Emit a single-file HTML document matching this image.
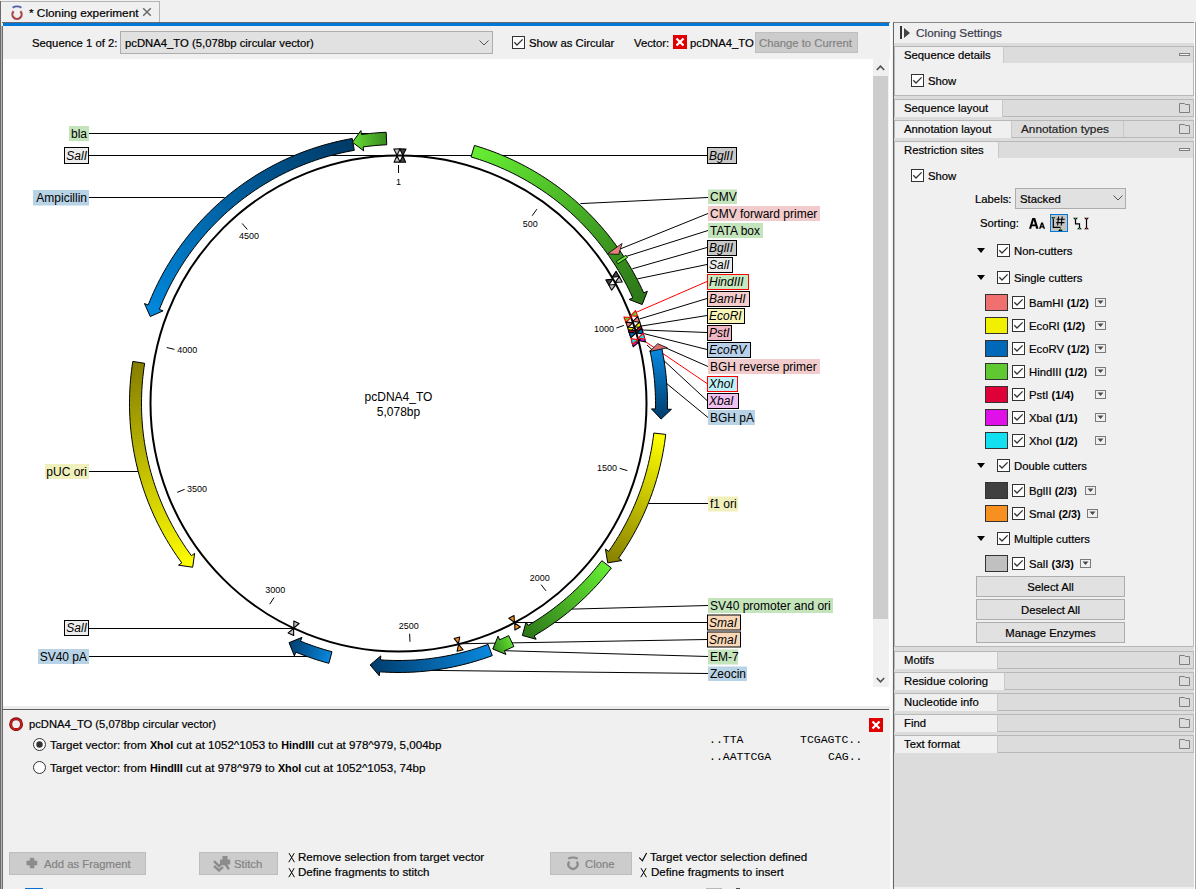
<!DOCTYPE html>
<html><head><meta charset="utf-8">
<style>
html,body{margin:0;padding:0}
body{width:1196px;height:889px;overflow:hidden;position:relative;background:#f0f0f0;font-family:"Liberation Sans",sans-serif;font-size:11.3px;color:#000}
.abs{position:absolute}
.t{position:absolute;white-space:nowrap;line-height:14px;-webkit-text-stroke:0.2px currentColor}
.secbox{left:894px;width:300px;background:#f0f0f0;border:1px solid #b8b8b8;box-sizing:border-box}
.sechead{left:894px;width:300px;background:#dcdcdc;border:1px solid #b8b8b8;box-sizing:border-box}
.sectab{left:894px;background:#f0f0f0;border-left:1px solid #b8b8b8;border-top:1px solid #b8b8b8;border-right:1px solid #c8c8c8;box-sizing:border-box}
.combo{background:#e1e1e1;border:1px solid #adadad}
.btn{background:#e1e1e1;border:1px solid #adadad;text-align:center;line-height:21px;-webkit-text-stroke:0.2px #000}
.dbtn{background:#cccccc;border:1px solid #bdbdbd;color:#838383;line-height:21px}
svg{display:block}
b{-webkit-text-stroke:0;font-size:10.8px}
svg text{font-family:"Liberation Sans",sans-serif}
</style></head><body>
<!-- tab bar -->
<div class="abs" style="left:1px;top:1px;width:159px;height:21px;background:#f0f0f0;border-top:1px solid #b4b4b4;border-right:1px solid #b4b4b4;box-sizing:border-box"></div>
<div class="abs" style="left:9px;top:4px"><svg width="16" height="18" viewBox="0 0 16 18"><path d="M3.6,3.6 Q8,1.2 12.4,3.6" fill="none" stroke="#5060a8" stroke-width="1.8"/><path d="M4.6,7.2 A4.6,4.6 0 1 0 11.4,7.2" fill="none" stroke="#a84848" stroke-width="2.2"/></svg></div>
<div class="t" style="left:29px;top:6px;font-size:11.8px">* Cloning experiment</div>
<div class="abs" style="left:142px;top:7px"><svg width="10" height="10"><path d="M1.2,1.2 L8.8,8.8 M8.8,1.2 L1.2,8.8" stroke="#6a6a6a" stroke-width="1.5"/></svg></div>
<div class="abs" style="left:2px;top:22px;width:889px;height:1px;background:#6a6a6a"></div>
<div class="abs" style="left:3px;top:23px;width:886px;height:3px;background:#0078d7"></div>
<!-- left border -->
<div class="abs" style="left:0;top:1px;width:1px;height:888px;background:#6a6a6a"></div>
<div class="abs" style="left:1px;top:26px;width:1px;height:863px;background:#b4b4b4"></div><div class="abs" style="left:2px;top:26px;width:1px;height:863px;background:#6a6a6a"></div>
<!-- toolbar -->
<div class="t" style="left:32px;top:36px">Sequence 1 of 2:</div>
<div class="abs combo" style="left:120px;top:31px;width:371px;height:21px"></div>
<div class="t" style="left:125px;top:36px">pcDNA4_TO (5,078bp circular vector)</div>
<div class="abs" style="left:479px;top:40px"><svg width="10" height="6"><path d="M0.5,0.5 L5,5 L9.5,0.5" fill="none" stroke="#555"/></svg></div>
<div class="abs" style="left:512px;top:36px;width:13px;height:13px"><svg width="13" height="13" viewBox="0 0 13 13" style="position:absolute;left:0;top:0"><rect x="0.5" y="0.5" width="12" height="12" fill="#fff" stroke="#333"/><path d="M2.3,6.3 L5,9 L10.6,3.4" fill="none" stroke="#333" stroke-width="1.3"/></svg></div>
<div class="t" style="left:529px;top:36px">Show as Circular</div>
<div class="t" style="left:634px;top:36px">Vector:</div>
<div class="abs" style="left:673px;top:35px;width:14px;height:14px;background:#e00000"><svg width="14" height="14"><path d="M3.5,3.5 L10.5,10.5 M10.5,3.5 L3.5,10.5" stroke="#fff" stroke-width="2.2"/></svg></div>
<div class="t" style="left:690px;top:36px">pcDNA4_TO</div>
<div class="abs" style="left:755px;top:32px;width:103px;height:21px;background:#cccccc;border:1px solid #bfbfbf;box-sizing:border-box"></div>
<div class="t" style="left:759px;top:36px;color:#838383">Change to Current</div>
<!-- map area -->
<div class="abs" style="left:3px;top:59px;width:887px;height:647px;background:#fff"></div>
<svg class="abs" style="left:3px;top:59px" width="870" height="647" viewBox="3 59 870 647"><defs><linearGradient id="g_amp" gradientUnits="userSpaceOnUse" x1="353.28" y1="144.42" x2="150.28" y2="316.57"><stop offset="0" stop-color="#003a66"/><stop offset="1" stop-color="#0088dd"/></linearGradient><linearGradient id="g_cmv" gradientUnits="userSpaceOnUse" x1="472.76" y1="151.20" x2="642.18" y2="304.55"><stop offset="0" stop-color="#66ee33"/><stop offset="1" stop-color="#2c7418"/></linearGradient><linearGradient id="g_bgh" gradientUnits="userSpaceOnUse" x1="655.85" y1="349.27" x2="661.04" y2="419.10"><stop offset="0" stop-color="#0a88de"/><stop offset="1" stop-color="#003c6c"/></linearGradient><linearGradient id="g_f1" gradientUnits="userSpaceOnUse" x1="659.76" y1="433.73" x2="607.71" y2="562.87"><stop offset="0" stop-color="#ffff00"/><stop offset="1" stop-color="#857f00"/></linearGradient><linearGradient id="g_sv40p" gradientUnits="userSpaceOnUse" x1="606.59" y1="564.33" x2="522.38" y2="635.50"><stop offset="0" stop-color="#66ee33"/><stop offset="1" stop-color="#2c7418"/></linearGradient><linearGradient id="g_em7" gradientUnits="userSpaceOnUse" x1="511.31" y1="641.08" x2="492.75" y2="649.03"><stop offset="0" stop-color="#60dd30"/><stop offset="1" stop-color="#348a1c"/></linearGradient><linearGradient id="g_zeo" gradientUnits="userSpaceOnUse" x1="490.17" y1="650.01" x2="370.10" y2="664.96"><stop offset="0" stop-color="#0a88de"/><stop offset="1" stop-color="#003c6c"/></linearGradient><linearGradient id="g_sv40pa" gradientUnits="userSpaceOnUse" x1="330.43" y1="657.54" x2="289.02" y2="642.63"><stop offset="0" stop-color="#0a88de"/><stop offset="1" stop-color="#003c6c"/></linearGradient><linearGradient id="g_puc" gradientUnits="userSpaceOnUse" x1="138.74" y1="362.36" x2="192.67" y2="567.22"><stop offset="0" stop-color="#857f00"/><stop offset="1" stop-color="#ffff00"/></linearGradient><linearGradient id="g_bla" gradientUnits="userSpaceOnUse" x1="386.47" y1="138.52" x2="352.44" y2="142.28"><stop offset="0" stop-color="#3a8a20"/><stop offset="1" stop-color="#66dd33"/></linearGradient></defs><line x1="368.70" y1="133.50" x2="89.00" y2="133.50" stroke="#000" stroke-width="1"/>
<line x1="89.00" y1="155.50" x2="707.00" y2="155.50" stroke="#000" stroke-width="1"/>
<line x1="224.60" y1="197.50" x2="89.00" y2="197.50" stroke="#000" stroke-width="1"/>
<line x1="138.40" y1="471.50" x2="89.00" y2="471.50" stroke="#000" stroke-width="1"/>
<line x1="293.50" y1="628.50" x2="89.00" y2="628.50" stroke="#000" stroke-width="1"/>
<line x1="307.40" y1="656.50" x2="89.00" y2="656.50" stroke="#000" stroke-width="1"/>
<line x1="580.40" y1="203.60" x2="708.00" y2="197.50" stroke="#000" stroke-width="1"/>
<line x1="620.60" y1="248.80" x2="708.00" y2="213.50" stroke="#000" stroke-width="1"/>
<line x1="624.00" y1="257.10" x2="708.00" y2="230.50" stroke="#000" stroke-width="1"/>
<line x1="632.30" y1="268.80" x2="707.00" y2="247.50" stroke="#000" stroke-width="1"/>
<line x1="637.30" y1="278.90" x2="707.00" y2="264.50" stroke="#000" stroke-width="1"/>
<line x1="639.40" y1="319.00" x2="707.00" y2="298.50" stroke="#000" stroke-width="1"/>
<line x1="641.60" y1="326.00" x2="707.00" y2="315.50" stroke="#000" stroke-width="1"/>
<line x1="643.00" y1="330.00" x2="707.00" y2="332.50" stroke="#000" stroke-width="1"/>
<line x1="643.50" y1="333.50" x2="707.00" y2="349.50" stroke="#000" stroke-width="1"/>
<line x1="666.00" y1="348.00" x2="708.00" y2="366.50" stroke="#000" stroke-width="1"/>
<line x1="647.00" y1="345.00" x2="707.00" y2="400.50" stroke="#000" stroke-width="1"/>
<line x1="666.00" y1="383.00" x2="708.00" y2="417.50" stroke="#000" stroke-width="1"/>
<line x1="648.50" y1="503.50" x2="708.00" y2="503.50" stroke="#000" stroke-width="1"/>
<line x1="572.10" y1="609.10" x2="708.00" y2="605.50" stroke="#000" stroke-width="1"/>
<line x1="514.40" y1="622.50" x2="707.00" y2="622.50" stroke="#000" stroke-width="1"/>
<line x1="458.40" y1="643.80" x2="707.00" y2="639.50" stroke="#000" stroke-width="1"/>
<line x1="504.50" y1="650.70" x2="708.00" y2="656.50" stroke="#000" stroke-width="1"/>
<line x1="431.70" y1="670.40" x2="708.00" y2="673.50" stroke="#000" stroke-width="1"/>
<line x1="636.00" y1="312.40" x2="707.00" y2="281.50" stroke="#f00" stroke-width="1"/>
<line x1="643.00" y1="340.00" x2="707.00" y2="383.50" stroke="#f00" stroke-width="1"/>
<circle cx="398.5" cy="403.5" r="248.0" fill="none" stroke="#000" stroke-width="2"/>
<line x1="398.50" y1="173.00" x2="398.50" y2="165.00" stroke="#000" stroke-width="1"/>
<text x="398.50" y="184.80" text-anchor="middle" font-size="9">1</text>
<line x1="532.18" y1="215.72" x2="536.82" y2="209.21" stroke="#000" stroke-width="1"/>
<text x="530.20" y="227.00" text-anchor="middle" font-size="9">500</text>
<line x1="616.30" y1="328.05" x2="623.86" y2="325.44" stroke="#000" stroke-width="1"/>
<text x="604.00" y="331.50" text-anchor="middle" font-size="9">1000</text>
<line x1="619.69" y1="468.35" x2="627.37" y2="470.60" stroke="#000" stroke-width="1"/>
<text x="607.00" y="471.00" text-anchor="middle" font-size="9">1500</text>
<line x1="541.08" y1="584.61" x2="546.03" y2="590.90" stroke="#000" stroke-width="1"/>
<text x="539.80" y="580.80" text-anchor="middle" font-size="9">2000</text>
<line x1="409.62" y1="633.73" x2="410.00" y2="641.72" stroke="#000" stroke-width="1"/>
<text x="408.80" y="628.80" text-anchor="middle" font-size="9">2500</text>
<line x1="274.04" y1="597.51" x2="269.72" y2="604.24" stroke="#000" stroke-width="1"/>
<text x="275.20" y="592.70" text-anchor="middle" font-size="9">3000</text>
<line x1="184.59" y1="489.36" x2="177.17" y2="492.34" stroke="#000" stroke-width="1"/>
<text x="197.10" y="491.90" text-anchor="middle" font-size="9">3500</text>
<line x1="174.44" y1="349.39" x2="166.66" y2="347.51" stroke="#000" stroke-width="1"/>
<text x="187.30" y="352.90" text-anchor="middle" font-size="9">4000</text>
<line x1="247.35" y1="229.48" x2="242.10" y2="223.44" stroke="#000" stroke-width="1"/>
<text x="249.00" y="239.30" text-anchor="middle" font-size="9">4500</text>
<path d="M352.25,138.51 L347.66,139.35 L343.09,140.27 L338.53,141.27 L334.00,142.35 L329.48,143.51 L324.98,144.74 L320.50,146.06 L316.05,147.45 L311.62,148.92 L307.22,150.46 L302.85,152.08 L298.50,153.78 L294.19,155.55 L289.90,157.40 L285.65,159.32 L281.43,161.31 L277.25,163.38 L273.11,165.51 L269.00,167.72 L264.93,170.01 L260.90,172.36 L256.91,174.78 L252.97,177.27 L249.07,179.82 L245.21,182.45 L241.40,185.14 L237.64,187.90 L233.92,190.72 L230.26,193.61 L226.64,196.55 L223.08,199.57 L219.57,202.64 L216.12,205.77 L212.71,208.96 L209.37,212.21 L206.08,215.52 L202.85,218.89 L199.68,222.31 L196.57,225.78 L193.51,229.31 L190.52,232.89 L187.60,236.52 L184.73,240.21 L181.93,243.94 L179.20,247.72 L176.53,251.54 L173.93,255.41 L171.40,259.33 L168.93,263.29 L166.53,267.29 L164.21,271.34 L161.95,275.42 L159.76,279.54 L157.65,283.70 L155.61,287.89 L153.64,292.12 L151.75,296.38 L149.93,300.68 L148.18,305.00 L144.46,303.54 L150.28,316.57 L163.07,310.86 L159.35,309.40 L161.02,305.27 L162.75,301.16 L164.56,297.09 L166.44,293.05 L168.39,289.04 L170.41,285.07 L172.50,281.13 L174.66,277.23 L176.88,273.37 L179.17,269.55 L181.53,265.76 L183.95,262.02 L186.43,258.32 L188.98,254.67 L191.60,251.06 L194.27,247.49 L197.01,243.97 L199.80,240.50 L202.66,237.08 L205.57,233.71 L208.55,230.39 L211.58,227.12 L214.66,223.91 L217.81,220.75 L221.00,217.64 L224.25,214.59 L227.55,211.60 L230.91,208.66 L234.31,205.79 L237.76,202.97 L241.27,200.21 L244.81,197.52 L248.41,194.88 L252.05,192.31 L255.73,189.80 L259.46,187.36 L263.23,184.98 L267.04,182.67 L270.89,180.42 L274.78,178.24 L278.70,176.13 L282.66,174.09 L286.66,172.11 L290.69,170.21 L294.75,168.37 L298.84,166.61 L302.96,164.92 L307.11,163.30 L311.29,161.75 L315.50,160.27 L319.73,158.87 L323.98,157.54 L328.26,156.29 L332.56,155.10 L336.87,154.00 L341.21,152.97 L345.56,152.01 L349.93,151.13 L354.31,150.33Z" fill="url(#g_amp)" stroke="#000" stroke-width="1"/>
<path d="M474.45,145.44 L478.88,146.79 L483.29,148.21 L487.67,149.71 L492.03,151.28 L496.36,152.93 L500.65,154.65 L504.92,156.45 L509.16,158.32 L513.37,160.26 L517.54,162.27 L521.67,164.36 L525.77,166.51 L529.83,168.74 L533.85,171.03 L537.83,173.40 L541.78,175.83 L545.67,178.33 L549.53,180.90 L553.34,183.53 L557.10,186.23 L560.82,188.99 L564.49,191.82 L568.11,194.71 L571.68,197.66 L575.19,200.67 L578.66,203.74 L582.07,206.87 L585.43,210.06 L588.73,213.31 L591.98,216.61 L595.17,219.97 L598.30,223.38 L601.37,226.85 L604.38,230.37 L607.33,233.94 L610.22,237.56 L613.04,241.23 L615.81,244.95 L618.50,248.71 L621.14,252.52 L623.70,256.38 L626.20,260.28 L628.63,264.22 L631.00,268.20 L633.29,272.22 L635.52,276.28 L637.67,280.38 L639.76,284.52 L641.77,288.69 L643.71,292.89 L647.36,291.25 L642.18,304.55 L629.12,299.47 L632.77,297.83 L630.92,293.81 L628.99,289.83 L627.00,285.87 L624.94,281.96 L622.82,278.08 L620.63,274.24 L618.37,270.43 L616.04,266.66 L613.66,262.94 L611.20,259.26 L608.69,255.62 L606.11,252.02 L603.47,248.47 L600.77,244.96 L598.01,241.50 L595.20,238.09 L592.32,234.73 L589.39,231.42 L586.39,228.16 L583.35,224.95 L580.25,221.79 L577.09,218.69 L573.88,215.64 L570.62,212.65 L567.31,209.72 L563.95,206.84 L560.54,204.02 L557.08,201.26 L553.58,198.56 L550.03,195.92 L546.43,193.34 L542.79,190.83 L539.11,188.38 L535.38,185.99 L531.62,183.66 L527.81,181.40 L523.97,179.21 L520.09,177.08 L516.18,175.02 L512.23,173.03 L508.24,171.11 L504.22,169.25 L500.18,167.47 L496.10,165.75 L491.99,164.11 L487.85,162.53 L483.69,161.03 L479.51,159.60 L475.30,158.24 L471.06,156.96Z" fill="url(#g_cmv)" stroke="#000" stroke-width="1"/>
<path d="M661.72,348.03 L662.59,352.34 L663.39,356.67 L664.12,361.01 L664.78,365.36 L665.37,369.72 L665.89,374.09 L666.33,378.47 L666.71,382.85 L667.01,387.24 L667.24,391.64 L667.40,396.03 L667.48,400.43 L667.50,404.83 L667.44,409.23 L671.44,409.32 L661.04,419.10 L651.44,408.89 L655.44,408.98 L655.50,404.77 L655.48,400.57 L655.40,396.37 L655.25,392.17 L655.03,387.97 L654.74,383.77 L654.38,379.59 L653.96,375.40 L653.47,371.23 L652.90,367.06 L652.27,362.91 L651.58,358.76 L650.81,354.63 L649.98,350.51Z" fill="url(#g_bgh)" stroke="#000" stroke-width="1"/>
<path d="M665.72,434.42 L665.15,439.00 L664.50,443.57 L663.77,448.13 L662.97,452.68 L662.08,457.21 L661.12,461.73 L660.08,466.23 L658.97,470.71 L657.78,475.17 L656.51,479.61 L655.16,484.02 L653.74,488.42 L652.25,492.79 L650.68,497.13 L649.04,501.44 L647.32,505.73 L645.53,509.99 L643.66,514.21 L641.73,518.40 L639.72,522.56 L637.64,526.68 L635.49,530.77 L633.27,534.82 L630.98,538.83 L628.62,542.80 L626.20,546.73 L623.71,550.62 L621.15,554.46 L618.52,558.26 L621.80,560.56 L607.71,562.87 L605.44,549.05 L608.71,551.36 L611.22,547.73 L613.66,544.05 L616.04,540.34 L618.36,536.58 L620.61,532.79 L622.80,528.96 L624.92,525.09 L626.97,521.19 L628.96,517.25 L630.88,513.28 L632.73,509.27 L634.51,505.24 L636.22,501.17 L637.86,497.07 L639.43,492.95 L640.93,488.80 L642.36,484.63 L643.71,480.43 L645.00,476.21 L646.21,471.97 L647.35,467.71 L648.42,463.43 L649.41,459.13 L650.32,454.81 L651.17,450.48 L651.94,446.14 L652.63,441.78 L653.25,437.42 L653.80,433.04Z" fill="url(#g_f1)" stroke="#000" stroke-width="1"/>
<path d="M611.34,568.00 L608.56,571.53 L605.72,575.02 L602.83,578.46 L599.88,581.85 L596.87,585.19 L593.80,588.48 L590.69,591.72 L587.51,594.90 L584.29,598.03 L581.01,601.11 L577.69,604.13 L574.31,607.10 L570.88,610.01 L567.41,612.86 L563.88,615.65 L560.32,618.39 L556.70,621.06 L553.05,623.67 L549.34,626.23 L545.60,628.72 L541.82,631.14 L537.99,633.51 L534.13,635.80 L536.15,639.26 L522.38,635.50 L526.06,621.99 L528.08,625.44 L531.77,623.24 L535.42,620.99 L539.04,618.67 L542.62,616.29 L546.15,613.85 L549.65,611.36 L553.10,608.80 L556.51,606.19 L559.87,603.52 L563.19,600.80 L566.46,598.02 L569.69,595.18 L572.87,592.30 L576.00,589.36 L579.08,586.36 L582.11,583.32 L585.09,580.23 L588.02,577.08 L590.89,573.89 L593.71,570.65 L596.48,567.37 L599.19,564.04 L601.84,560.66Z" fill="url(#g_sv40p)" stroke="#000" stroke-width="1"/>
<path d="M513.88,646.50 L510.73,647.97 L507.56,649.40 L504.38,650.79 L505.95,654.46 L492.75,649.03 L498.08,636.08 L499.65,639.76 L502.70,638.43 L505.73,637.06 L508.74,635.66Z" fill="url(#g_em7)" stroke="#000" stroke-width="1"/>
<path d="M492.27,655.63 L487.95,657.19 L483.62,658.68 L479.25,660.09 L474.87,661.43 L470.46,662.70 L466.03,663.89 L461.58,665.00 L457.11,666.04 L452.63,667.00 L448.13,667.88 L443.61,668.69 L439.09,669.42 L434.55,670.07 L430.00,670.65 L425.44,671.15 L420.87,671.57 L416.30,671.91 L411.72,672.18 L407.14,672.36 L402.55,672.47 L397.96,672.50 L393.38,672.45 L388.79,672.32 L384.21,672.12 L379.64,671.84 L379.35,675.83 L370.10,664.96 L380.76,655.88 L380.48,659.87 L384.85,660.14 L389.23,660.33 L393.61,660.45 L397.99,660.50 L402.37,660.47 L406.75,660.37 L411.13,660.19 L415.50,659.94 L419.87,659.61 L424.24,659.21 L428.59,658.73 L432.94,658.18 L437.28,657.56 L441.60,656.86 L445.91,656.09 L450.21,655.24 L454.50,654.33 L458.77,653.33 L463.02,652.27 L467.25,651.13 L471.46,649.93 L475.65,648.65 L479.82,647.30 L483.96,645.87 L488.08,644.38Z" fill="url(#g_zeo)" stroke="#000" stroke-width="1"/>
<path d="M328.88,663.33 L324.68,662.17 L320.50,660.94 L316.34,659.65 L312.21,658.28 L308.09,656.85 L304.00,655.36 L299.94,653.79 L295.90,652.16 L294.37,655.86 L289.02,642.63 L302.00,637.37 L300.48,641.07 L304.34,642.63 L308.22,644.12 L312.13,645.55 L316.06,646.92 L320.01,648.22 L323.98,649.46 L327.97,650.63 L331.98,651.74Z" fill="url(#g_sv40pa)" stroke="#000" stroke-width="1"/>
<path d="M132.81,361.42 L132.13,365.99 L131.52,370.58 L131.00,375.18 L130.55,379.78 L130.18,384.39 L129.89,389.01 L129.68,393.63 L129.55,398.25 L129.50,402.88 L129.53,407.50 L129.64,412.13 L129.83,416.75 L130.09,421.37 L130.44,425.98 L130.87,430.58 L131.37,435.18 L131.96,439.77 L132.62,444.35 L133.36,448.91 L134.18,453.47 L135.08,458.00 L136.06,462.53 L137.11,467.03 L138.24,471.52 L139.45,475.98 L140.73,480.42 L142.09,484.85 L143.53,489.24 L145.04,493.61 L146.63,497.96 L148.29,502.28 L150.03,506.56 L151.84,510.82 L153.72,515.05 L155.67,519.24 L157.70,523.40 L159.79,527.52 L161.96,531.61 L164.20,535.65 L166.51,539.66 L168.88,543.63 L171.33,547.56 L173.84,551.44 L176.41,555.29 L179.06,559.08 L181.76,562.83 L178.54,565.20 L192.67,567.22 L194.66,553.36 L191.43,555.72 L188.85,552.14 L186.32,548.51 L183.86,544.85 L181.46,541.13 L179.13,537.38 L176.86,533.59 L174.65,529.76 L172.51,525.89 L170.44,521.99 L168.44,518.05 L166.50,514.08 L164.64,510.07 L162.84,506.03 L161.11,501.97 L159.45,497.87 L157.87,493.74 L156.35,489.59 L154.90,485.42 L153.53,481.22 L152.23,476.99 L151.00,472.75 L149.85,468.48 L148.77,464.20 L147.76,459.89 L146.83,455.57 L145.97,451.24 L145.19,446.89 L144.48,442.53 L143.85,438.15 L143.29,433.77 L142.81,429.38 L142.40,424.98 L142.07,420.57 L141.81,416.16 L141.63,411.74 L141.53,407.32 L141.50,402.90 L141.55,398.49 L141.67,394.07 L141.87,389.65 L142.15,385.24 L142.50,380.84 L142.93,376.44 L143.43,372.05 L144.01,367.67 L144.66,363.30Z" fill="url(#g_puc)" stroke="#000" stroke-width="1"/>
<path d="M386.18,132.28 L382.05,132.50 L377.92,132.78 L373.80,133.13 L369.68,133.53 L365.57,134.00 L361.47,134.54 L360.92,130.58 L352.44,142.28 L363.72,150.88 L363.17,146.92 L367.09,146.41 L371.01,145.96 L374.94,145.57 L378.87,145.24 L382.81,144.98 L386.75,144.77Z" fill="url(#g_bla)" stroke="#000" stroke-width="1"/>
<path d="M607.47,253.89 L622.10,243.42 L618.76,254.37Z" fill="#e88080" stroke="#000" stroke-width="0.8"/>
<path d="M616.31,261.51 L625.94,255.23 L627.48,257.62 L617.78,263.80Z" fill="#66ee33" stroke="#000" stroke-width="0.8"/>
<path d="M649.67,351.49 L667.30,347.83 L657.68,343.66Z" fill="#d87070" stroke="#000" stroke-width="0.8"/>
<path d="M396.98,155.20 L393.87,148.94 L400.02,148.90Z" fill="#c8c8c8" stroke="#000" stroke-width="1.1" stroke-linejoin="round"/>
<path d="M396.99,155.80 L394.11,162.14 L399.95,162.10Z" fill="#c8c8c8" stroke="#000" stroke-width="1.1" stroke-linejoin="round"/>
<path d="M402.83,155.24 L399.86,148.90 L406.02,149.01Z" fill="#404040" stroke="#000" stroke-width="1.1" stroke-linejoin="round"/>
<path d="M402.82,155.84 L399.79,162.10 L405.63,162.21Z" fill="#404040" stroke="#000" stroke-width="1.1" stroke-linejoin="round"/>
<path d="M612.22,277.11 L616.06,271.26 L619.20,276.56Z" fill="#404040" stroke="#000" stroke-width="1.1" stroke-linejoin="round"/>
<path d="M612.80,279.28 L605.87,279.92 L608.80,284.97Z" fill="#404040" stroke="#000" stroke-width="1.1" stroke-linejoin="round"/>
<path d="M615.25,282.36 L619.23,276.61 L622.23,281.99Z" fill="#c0c0c0" stroke="#000" stroke-width="1.1" stroke-linejoin="round"/>
<path d="M615.77,284.55 L608.83,285.02 L611.63,290.14Z" fill="#c0c0c0" stroke="#000" stroke-width="1.1" stroke-linejoin="round"/>
<path d="M630.77,315.73 L635.56,310.63 L637.74,316.39Z" fill="#60c830" stroke="#f00" stroke-width="1.1" stroke-linejoin="round"/>
<path d="M630.82,317.56 L623.88,317.02 L625.90,322.49Z" fill="#60c830" stroke="#f00" stroke-width="1.1" stroke-linejoin="round"/>
<path d="M632.85,321.43 L637.76,316.45 L639.79,322.26Z" fill="#f07070" stroke="#000" stroke-width="1.1" stroke-linejoin="round"/>
<path d="M632.70,322.86 L625.78,322.15 L627.68,327.67Z" fill="#f07070" stroke="#000" stroke-width="1.1" stroke-linejoin="round"/>
<path d="M634.65,326.77 L639.67,321.90 L641.57,327.76Z" fill="#f0f000" stroke="#000" stroke-width="1.1" stroke-linejoin="round"/>
<path d="M634.34,327.78 L627.43,326.93 L629.22,332.49Z" fill="#f0f000" stroke="#000" stroke-width="1.1" stroke-linejoin="round"/>
<path d="M635.82,330.49 L640.92,325.70 L642.73,331.59Z" fill="#e00038" stroke="#000" stroke-width="1.1" stroke-linejoin="round"/>
<path d="M635.25,330.67 L628.35,329.73 L630.07,335.31Z" fill="#e00038" stroke="#000" stroke-width="1.1" stroke-linejoin="round"/>
<path d="M636.57,332.98 L641.72,328.24 L643.47,334.15Z" fill="#0068b8" stroke="#000" stroke-width="1.1" stroke-linejoin="round"/>
<path d="M636.00,333.15 L629.11,332.14 L630.77,337.74Z" fill="#0068b8" stroke="#000" stroke-width="1.1" stroke-linejoin="round"/>
<path d="M638.67,340.49 L643.97,335.92 L645.53,341.88Z" fill="#e010e8" stroke="#000" stroke-width="1.1" stroke-linejoin="round"/>
<path d="M638.53,342.32 L631.68,341.05 L633.12,346.71Z" fill="#e010e8" stroke="#000" stroke-width="1.1" stroke-linejoin="round"/>
<path d="M638.00,337.98 L643.25,333.35 L644.87,339.29Z" fill="#10e0f0" stroke="#f00" stroke-width="1.1" stroke-linejoin="round"/>
<path d="M637.87,339.81 L631.02,338.61 L632.52,344.25Z" fill="#10e0f0" stroke="#f00" stroke-width="1.1" stroke-linejoin="round"/>
<path d="M514.69,622.94 L520.35,627.05 L514.90,629.93Z" fill="#f89020" stroke="#000" stroke-width="1.1" stroke-linejoin="round"/>
<path d="M514.41,622.41 L514.03,615.46 L508.87,618.19Z" fill="#f89020" stroke="#000" stroke-width="1.1" stroke-linejoin="round"/>
<path d="M458.57,644.42 L463.08,649.77 L457.10,651.26Z" fill="#f89020" stroke="#000" stroke-width="1.1" stroke-linejoin="round"/>
<path d="M458.42,643.84 L459.73,637.01 L454.06,638.42Z" fill="#f89020" stroke="#000" stroke-width="1.1" stroke-linejoin="round"/>
<path d="M293.56,628.54 L293.70,635.53 L288.12,632.93Z" fill="#c0c0c0" stroke="#000" stroke-width="1.1" stroke-linejoin="round"/>
<path d="M293.82,627.99 L299.13,623.50 L293.84,621.03Z" fill="#c0c0c0" stroke="#000" stroke-width="1.1" stroke-linejoin="round"/>
<text x="398.5" y="401" text-anchor="middle" font-size="12">pcDNA4_TO</text>
<text x="398.5" y="415.5" text-anchor="middle" font-size="12">5,078bp</text>
<rect x="69" y="126" width="20" height="15" fill="#c4e4bc"/><text x="87" y="137.80" text-anchor="end" font-size="12">bla</text>
<rect x="64.5" y="147.5" width="24" height="16" fill="#ececec" stroke="#000" stroke-width="1"/><text x="87" y="159.80" text-anchor="end" font-size="12" font-style="italic">SalI</text>
<rect x="33" y="190" width="56" height="15.5" fill="#b8d2e6"/><text x="87" y="202.05" text-anchor="end" font-size="12">Ampicillin</text>
<rect x="45" y="464" width="44" height="15" fill="#f0f0bc"/><text x="87" y="475.80" text-anchor="end" font-size="12">pUC ori</text>
<rect x="64.5" y="620.5" width="24" height="15" fill="#ececec" stroke="#000" stroke-width="1"/><text x="87" y="632.30" text-anchor="end" font-size="12" font-style="italic">SalI</text>
<rect x="38" y="649" width="51" height="15" fill="#b8d2e6"/><text x="87" y="660.80" text-anchor="end" font-size="12">SV40 pA</text>
<rect x="707.5" y="147.5" width="29" height="16" fill="#c8c8c8" stroke="#000" stroke-width="1"/><text x="709" y="159.80" font-size="12" font-style="italic">BglII</text>
<rect x="708" y="189.5" width="29" height="14.5" fill="#c4e4bc"/><text x="710" y="201.05" font-size="12">CMV</text>
<rect x="708" y="206" width="112" height="15" fill="#f2cccc"/><text x="710" y="217.80" font-size="12">CMV forward primer</text>
<rect x="708" y="223" width="55" height="15" fill="#c4e4bc"/><text x="710" y="234.80" font-size="12">TATA box</text>
<rect x="707.5" y="240.5" width="29" height="15" fill="#c8c8c8" stroke="#000" stroke-width="1"/><text x="709" y="252.30" font-size="12" font-style="italic">BglII</text>
<rect x="707.5" y="257.5" width="25" height="15" fill="#ececec" stroke="#000" stroke-width="1"/><text x="709" y="269.30" font-size="12" font-style="italic">SalI</text>
<rect x="707.5" y="274.5" width="41" height="15" fill="#c8e8c0" stroke="#f00" stroke-width="1"/><text x="709" y="286.30" font-size="12" font-style="italic">HindIII</text>
<rect x="707.5" y="291.5" width="42" height="15" fill="#f5cccc" stroke="#000" stroke-width="1"/><text x="709" y="303.30" font-size="12" font-style="italic">BamHI</text>
<rect x="707.5" y="308.5" width="37" height="15" fill="#f8f5b8" stroke="#000" stroke-width="1"/><text x="709" y="320.30" font-size="12" font-style="italic">EcoRI</text>
<rect x="707.5" y="325.5" width="24" height="15" fill="#f0b8c4" stroke="#000" stroke-width="1"/><text x="709" y="337.30" font-size="12" font-style="italic">PstI</text>
<rect x="707.5" y="342.5" width="43" height="15" fill="#b8d0e8" stroke="#000" stroke-width="1"/><text x="709" y="354.30" font-size="12" font-style="italic">EcoRV</text>
<rect x="708" y="359" width="112" height="15" fill="#f2cccc"/><text x="710" y="370.80" font-size="12">BGH reverse primer</text>
<rect x="707.5" y="376.5" width="30" height="15" fill="#c0f0f8" stroke="#f00" stroke-width="1"/><text x="709" y="388.30" font-size="12" font-style="italic">XhoI</text>
<rect x="707.5" y="393.5" width="31" height="15" fill="#f0c0f0" stroke="#000" stroke-width="1"/><text x="709" y="405.30" font-size="12" font-style="italic">XbaI</text>
<rect x="708" y="410" width="47" height="15" fill="#b8d2e6"/><text x="710" y="421.80" font-size="12">BGH pA</text>
<rect x="708" y="496.5" width="30" height="15.0" fill="#f0f0bc"/><text x="710" y="508.30" font-size="12">f1 ori</text>
<rect x="708" y="598" width="125" height="15" fill="#c4e4bc"/><text x="710" y="609.80" font-size="12">SV40 promoter and ori</text>
<rect x="707.5" y="615.0" width="33" height="15.0" fill="#f8d8b8" stroke="#000" stroke-width="1"/><text x="709" y="626.80" font-size="12" font-style="italic">SmaI</text>
<rect x="707.5" y="632.0" width="33" height="15.0" fill="#f8d8b8" stroke="#000" stroke-width="1"/><text x="709" y="643.80" font-size="12" font-style="italic">SmaI</text>
<rect x="708" y="649.5" width="30" height="15.0" fill="#c4e4bc"/><text x="710" y="661.30" font-size="12">EM-7</text>
<rect x="708" y="666.5" width="39" height="14.5" fill="#b8d2e6"/><text x="710" y="678.05" font-size="12">Zeocin</text></svg>
<!-- scrollbar -->
<div class="abs" style="left:873px;top:59px;width:16px;height:628px;background:#f0f0f0"></div>
<div class="abs" style="left:873px;top:76px;width:15px;height:543px;background:#cdcdcd"></div>
<div class="abs" style="left:876px;top:65px"><svg width="9" height="6"><path d="M0.8,5 L4.5,1.2 L8.2,5" fill="none" stroke="#505050" stroke-width="1.6"/></svg></div>
<div class="abs" style="left:876px;top:677px"><svg width="9" height="6"><path d="M0.8,1 L4.5,4.8 L8.2,1" fill="none" stroke="#505050" stroke-width="1.6"/></svg></div>
<div class="abs" style="left:3px;top:706px;width:886px;height:3px;background:#ececec"></div>
<div class="abs" style="left:2px;top:709px;width:887px;height:1px;background:#606060"></div>
<div class="abs" style="left:890px;top:22px;width:2px;height:867px;background:#fafafa"></div>
<!-- bottom panel -->
<div class="abs" style="left:9px;top:717px"><svg width="14" height="14"><circle cx="7.1" cy="7.2" r="6.9" fill="#7a0808"/><circle cx="7.1" cy="7.2" r="6" fill="#d82020"/><circle cx="7.1" cy="7.2" r="4.6" fill="#6a1010"/><circle cx="7.1" cy="7.2" r="3.9" fill="#f2eeee"/></svg></div>
<div class="t" style="left:29px;top:717px;font-size:11.2px">pcDNA4_TO (5,078bp circular vector)</div>
<div class="abs" style="left:869px;top:718px;width:14px;height:14px;background:#e00000"><svg width="14" height="14"><path d="M3.5,3.5 L10.5,10.5 M10.5,3.5 L3.5,10.5" stroke="#fff" stroke-width="2.2"/></svg></div>
<div class="abs" style="left:33px;top:738px"><svg width="13" height="13"><circle cx="6.5" cy="6.5" r="6" fill="#fff" stroke="#333"/><circle cx="6.5" cy="6.5" r="3.2" fill="#333"/></svg></div>
<div class="t" style="left:50px;top:738px;font-size:11.6px">Target vector: from <b>XhoI</b> cut at 1052^1053 to <b>HindIII</b> cut at 978^979, 5,004bp</div>
<div class="abs" style="left:33px;top:761px"><svg width="13" height="13"><circle cx="6.5" cy="6.5" r="6" fill="#fff" stroke="#333"/></svg></div>
<div class="t" style="left:50px;top:761px;font-size:11.6px">Target vector: from <b>HindIII</b> cut at 978^979 to <b>XhoI</b> cut at 1052^1053, 74bp</div>
<div class="t" style="left:709px;top:733px;font-family:'Liberation Mono';font-size:11.5px;-webkit-text-stroke:0">..TTA</div>
<div class="t" style="left:800px;top:733px;font-family:'Liberation Mono';font-size:11.5px;-webkit-text-stroke:0">TCGAGTC..</div>
<div class="t" style="left:709px;top:750px;font-family:'Liberation Mono';font-size:11.5px;-webkit-text-stroke:0">..AATTCGA</div>
<div class="t" style="left:828px;top:750px;font-family:'Liberation Mono';font-size:11.5px;-webkit-text-stroke:0">CAG..</div>
<div class="abs dbtn" style="left:9px;top:852px;width:135px;height:21px"></div>
<div class="t" style="left:44px;top:857px;color:#838383">Add as Fragment</div>
<div class="abs" style="left:26px;top:857px"><svg width="12" height="12"><path d="M4.2,1.2 H8 V4 H10.9 V8 H8 V10.9 H4.2 V8 H0.9 V4 H4.2Z" fill="#8c8c8c" stroke="#888" stroke-width="0.6"/></svg></div>
<div class="abs dbtn" style="left:199px;top:852px;width:77px;height:21px"></div>
<div class="t" style="left:234px;top:857px;color:#838383">Stitch</div>
<svg class="abs" style="left:210px;top:852px" width="24" height="22" viewBox="210 852 24 22"><path d="M222.5,856 H227.5 V859.5 H230.2 V864.5 H227.5 L229.8,868.8 L227.8,870 L225,865.5 H222.5 V864.5 H220 V859.5 H222.5Z" fill="#8c8c8c"/><path d="M214,861.2 L219,866 L223,862.5 M214,866 L219,870.4 L223,867" fill="none" stroke="#8c8c8c" stroke-width="2.4"/></svg>
<svg class="abs" style="left:287px;top:852px" width="9" height="11"><path d="M2,1.2 L7.4,10.2 M7.2,1.2 L1.8,10.2" fill="none" stroke="#000" stroke-width="1.0"/></svg><div class="t" style="left:298px;top:850px;font-size:11.6px">Remove selection from target vector</div>
<svg class="abs" style="left:287px;top:867px" width="9" height="11"><path d="M2,1.2 L7.4,10.2 M7.2,1.2 L1.8,10.2" fill="none" stroke="#000" stroke-width="1.0"/></svg><div class="t" style="left:298px;top:865px;font-size:11.6px">Define fragments to stitch</div>
<div class="abs dbtn" style="left:550px;top:852px;width:80px;height:21px"></div>
<div class="t" style="left:585px;top:857px;color:#838383">Clone</div>
<svg class="abs" style="left:565px;top:854px" width="16" height="18" viewBox="565 854 16 18"><path d="M568.2,858.6 Q573,856.6 577.8,858.6" fill="none" stroke="#8c8c8c" stroke-width="2"/><path d="M569.2,861.6 A4.6,4.6 0 1 0 576.8,861.6" fill="none" stroke="#8c8c8c" stroke-width="2.3"/></svg>
<svg class="abs" style="left:638px;top:852px" width="10" height="10"><path d="M1.3,5.6 L4.4,8.8 L8.6,1" fill="none" stroke="#000" stroke-width="1.15"/></svg><div class="t" style="left:650px;top:850px;font-size:11.6px">Target vector selection defined</div>
<svg class="abs" style="left:639px;top:867px" width="9" height="11"><path d="M2,1.2 L7.4,10.2 M7.2,1.2 L1.8,10.2" fill="none" stroke="#000" stroke-width="1.0"/></svg><div class="t" style="left:651px;top:865px;font-size:11.6px">Define fragments to insert</div>
<div class="abs" style="left:25px;top:888px;width:18px;height:1px;background:#0a70d0"></div><div class="abs" style="left:706px;top:888px;width:16px;height:1px;background:#b8b8b8"></div><div class="abs" style="left:736px;top:888px;width:4px;height:1px;background:#505050"></div>
<!-- right panel -->
<div class="abs" style="left:893px;top:22px;width:1px;height:867px;background:#646464"></div>
<div class="abs" style="left:894px;top:22px;width:302px;height:1px;background:#8a8a8a"></div>
<div class="abs" style="left:900px;top:26px;width:2px;height:13px;background:#333"></div>
<div class="abs" style="left:904px;top:28px"><svg width="6" height="10"><path d="M0,0 L6,5 L0,10Z" fill="#444"/></svg></div>
<div class="t" style="left:916px;top:26px;color:#3a3a4a;font-size:11.8px">Cloning Settings</div>
<div class="abs" style="left:894px;top:43px;width:302px;height:846px;background:#dcdcdc"></div>
<div class="abs secbox" style="top:46px;height:50px"></div>
<div class="abs sechead" style="top:46px;height:17px;border-bottom:none"></div><div class="abs sectab" style="top:46px;height:17px;width:110px"></div><div class="t" style="left:904px;top:48px;">Sequence details</div><div class="abs" style="left:1179px;top:53px"><svg width="12" height="4" viewBox="0 0 12 4"><rect x="0.5" y="0.5" width="10" height="2" fill="#f0f0f0" stroke="#808080"/></svg></div>
<div class="abs" style="left:911px;top:74px;width:13px;height:13px"><svg width="13" height="13" viewBox="0 0 13 13" style="position:absolute;left:0;top:0"><rect x="0.5" y="0.5" width="12" height="12" fill="#fff" stroke="#333"/><path d="M2.3,6.3 L5,9 L10.6,3.4" fill="none" stroke="#333" stroke-width="1.3"/></svg></div>
<div class="t" style="left:928px;top:74px;">Show</div>
<div class="abs secbox" style="top:99px;height:18px"></div>
<div class="abs sechead" style="top:99px;height:18px"></div><div class="abs sectab" style="top:99px;height:18px;width:109px"></div><div class="t" style="left:904px;top:101px;">Sequence layout</div><div class="abs" style="left:1179px;top:103px"><svg width="12" height="11" viewBox="0 0 12 11"><path d="M0.5,0.5 L5.5,0.5 L6.3,1.5 L10.5,1.5 L10.5,9.5 L0.5,9.5 Z" fill="none" stroke="#808080"/></svg></div>
<div class="abs secbox" style="top:120px;height:18px"></div>
<div class="abs sechead" style="top:120px;height:18px"></div><div class="abs sectab" style="top:120px;height:18px;width:118px"></div><div class="t" style="left:904px;top:122px;">Annotation layout</div><div class="abs" style="left:1012px;top:121px;width:111px;height:16px;background:#dcdcdc;border-right:1px solid #c8c8c8"></div><div class="t" style="left:1021px;top:122px;color:#222;font-size:11.8px">Annotation types</div><div class="abs" style="left:1179px;top:124px"><svg width="12" height="11" viewBox="0 0 12 11"><path d="M0.5,0.5 L5.5,0.5 L6.3,1.5 L10.5,1.5 L10.5,9.5 L0.5,9.5 Z" fill="none" stroke="#808080"/></svg></div>
<div class="abs secbox" style="top:141px;height:506px"></div>
<div class="abs sechead" style="top:141px;height:17px;border-bottom:none"></div><div class="abs sectab" style="top:141px;height:17px;width:105px"></div><div class="t" style="left:904px;top:143px;">Restriction sites</div><div class="abs" style="left:1179px;top:148px"><svg width="12" height="4" viewBox="0 0 12 4"><rect x="0.5" y="0.5" width="10" height="2" fill="#f0f0f0" stroke="#808080"/></svg></div>
<div class="abs" style="left:911px;top:169px;width:13px;height:13px"><svg width="13" height="13" viewBox="0 0 13 13" style="position:absolute;left:0;top:0"><rect x="0.5" y="0.5" width="12" height="12" fill="#fff" stroke="#333"/><path d="M2.3,6.3 L5,9 L10.6,3.4" fill="none" stroke="#333" stroke-width="1.3"/></svg></div>
<div class="t" style="left:928px;top:169px;">Show</div>
<div class="t" style="left:975px;top:192px;">Labels:</div>
<div class="abs combo" style="left:1015px;top:188px;width:109px;height:19px"></div>
<div class="t" style="left:1020px;top:192px;">Stacked</div>
<div class="abs" style="left:1113px;top:195px"><svg width="10" height="6"><path d="M0.5,0.5 L5,5 L9.5,0.5" fill="none" stroke="#555"/></svg></div>
<div class="t" style="left:980px;top:216px;">Sorting:</div>
<div class="abs" style="left:1050px;top:214px;width:16px;height:16px;border:1px solid #0078d7;background:#c4c4c4"></div>
<svg class="abs" style="left:1020px;top:205px" width="80" height="35" viewBox="1020 205 80 35">
<path d="M1029,228.7 L1032.3,218 L1035.2,218 L1038.5,228.7 L1036.2,228.7 L1035.5,226.3 L1031.9,226.3 L1031.2,228.7Z M1032.5,224.4 L1034.9,224.4 L1033.7,220.2Z" fill="#000"/>
<path d="M1039,228.7 L1041.2,222.5 L1042.9,222.5 L1045.1,228.7 L1043.5,228.7 L1043.1,227.4 L1041,227.4 L1040.6,228.7Z M1041.4,226.2 L1042.7,226.2 L1042.05,224.2Z" fill="#000"/>
<path d="M1051.2,217.2 L1055.4,217.2 L1053.3,219.6Z" fill="#000"/>
<path d="M1053.3,218.5 L1053.3,227.3 L1060.5,227.3" fill="none" stroke="#000" stroke-width="1.2"/>
<path d="M1058.2,231 L1062.6,231 L1060.4,228.3Z" fill="#000"/>
<circle cx="1053.3" cy="218.3" r="0.7" fill="#20c020"/><circle cx="1060.4" cy="229.8" r="0.7" fill="#20c020"/>
<path d="M1058.6,216.5 L1057.6,225.5 M1062.2,216.5 L1061.2,225.5 M1056.6,219.2 L1064.8,219.2 M1056.2,222.6 L1064.4,222.6" fill="none" stroke="#000" stroke-width="1.1"/>
<path d="M1073,217.8 L1078,217.8 L1075.5,220.2Z" fill="#000"/>
<path d="M1075.5,219 L1075.5,223.8 L1079.5,223.8 L1079.5,228.5" fill="none" stroke="#000" stroke-width="1.2"/>
<path d="M1077,229.3 L1082,229.3 L1079.5,226.9Z" fill="#000"/>
<circle cx="1075.5" cy="218.6" r="0.7" fill="#20c020"/><circle cx="1079.5" cy="228.5" r="0.7" fill="#20c020"/>
<path d="M1084,217.8 L1089,217.8 L1086.5,220.2Z M1084,229.3 L1089,229.3 L1086.5,226.9Z" fill="#000"/>
<path d="M1086.5,219 L1086.5,228.5" fill="none" stroke="#000" stroke-width="1.2"/>
<circle cx="1086.5" cy="218.6" r="0.7" fill="#e02020"/><circle cx="1086.5" cy="228.5" r="0.7" fill="#e02020"/>
</svg>
<div class="abs" style="left:977px;top:248px"><svg width="8" height="5" viewBox="0 0 8 5"><path d="M0,0 L8,0 L4,5Z" fill="#000"/></svg></div><div class="abs" style="left:997px;top:244px;width:13px;height:13px"><svg width="13" height="13" viewBox="0 0 13 13" style="position:absolute;left:0;top:0"><rect x="0.5" y="0.5" width="12" height="12" fill="#fff" stroke="#333"/><path d="M2.3,6.3 L5,9 L10.6,3.4" fill="none" stroke="#333" stroke-width="1.3"/></svg></div><div class="t" style="left:1014px;top:244px;">Non-cutters</div>
<div class="abs" style="left:977px;top:275px"><svg width="8" height="5" viewBox="0 0 8 5"><path d="M0,0 L8,0 L4,5Z" fill="#000"/></svg></div><div class="abs" style="left:997px;top:271px;width:13px;height:13px"><svg width="13" height="13" viewBox="0 0 13 13" style="position:absolute;left:0;top:0"><rect x="0.5" y="0.5" width="12" height="12" fill="#fff" stroke="#333"/><path d="M2.3,6.3 L5,9 L10.6,3.4" fill="none" stroke="#333" stroke-width="1.3"/></svg></div><div class="t" style="left:1014px;top:271px;">Single cutters</div>
<div class="abs" style="left:985px;top:294px;width:21px;height:15px;background:#f07070;border:1px solid #333"></div><div class="abs" style="left:1012px;top:296px;width:13px;height:13px"><svg width="13" height="13" viewBox="0 0 13 13" style="position:absolute;left:0;top:0"><rect x="0.5" y="0.5" width="12" height="12" fill="#fff" stroke="#333"/><path d="M2.3,6.3 L5,9 L10.6,3.4" fill="none" stroke="#333" stroke-width="1.3"/></svg></div><div class="t" style="left:1029px;top:296px;">BamHI <b>(1/2)</b></div><div class="abs" style="left:1095px;top:298px"><svg width="11" height="9" viewBox="0 0 11 9"><rect x="0.5" y="0.5" width="10" height="8" fill="#f0f0f0" stroke="#7a7a7a"/><path d="M2.5,2.5 L8.5,2.5 L5.5,6Z" fill="#4a4a4a"/></svg></div>
<div class="abs" style="left:985px;top:317px;width:21px;height:15px;background:#f0f000;border:1px solid #333"></div><div class="abs" style="left:1012px;top:319px;width:13px;height:13px"><svg width="13" height="13" viewBox="0 0 13 13" style="position:absolute;left:0;top:0"><rect x="0.5" y="0.5" width="12" height="12" fill="#fff" stroke="#333"/><path d="M2.3,6.3 L5,9 L10.6,3.4" fill="none" stroke="#333" stroke-width="1.3"/></svg></div><div class="t" style="left:1029px;top:319px;">EcoRI <b>(1/2)</b></div><div class="abs" style="left:1095px;top:321px"><svg width="11" height="9" viewBox="0 0 11 9"><rect x="0.5" y="0.5" width="10" height="8" fill="#f0f0f0" stroke="#7a7a7a"/><path d="M2.5,2.5 L8.5,2.5 L5.5,6Z" fill="#4a4a4a"/></svg></div>
<div class="abs" style="left:985px;top:340px;width:21px;height:15px;background:#0068b8;border:1px solid #333"></div><div class="abs" style="left:1012px;top:342px;width:13px;height:13px"><svg width="13" height="13" viewBox="0 0 13 13" style="position:absolute;left:0;top:0"><rect x="0.5" y="0.5" width="12" height="12" fill="#fff" stroke="#333"/><path d="M2.3,6.3 L5,9 L10.6,3.4" fill="none" stroke="#333" stroke-width="1.3"/></svg></div><div class="t" style="left:1029px;top:342px;">EcoRV <b>(1/2)</b></div><div class="abs" style="left:1095px;top:344px"><svg width="11" height="9" viewBox="0 0 11 9"><rect x="0.5" y="0.5" width="10" height="8" fill="#f0f0f0" stroke="#7a7a7a"/><path d="M2.5,2.5 L8.5,2.5 L5.5,6Z" fill="#4a4a4a"/></svg></div>
<div class="abs" style="left:985px;top:363px;width:21px;height:15px;background:#60c830;border:1px solid #333"></div><div class="abs" style="left:1012px;top:365px;width:13px;height:13px"><svg width="13" height="13" viewBox="0 0 13 13" style="position:absolute;left:0;top:0"><rect x="0.5" y="0.5" width="12" height="12" fill="#fff" stroke="#333"/><path d="M2.3,6.3 L5,9 L10.6,3.4" fill="none" stroke="#333" stroke-width="1.3"/></svg></div><div class="t" style="left:1029px;top:365px;">HindIII <b>(1/2)</b></div><div class="abs" style="left:1095px;top:367px"><svg width="11" height="9" viewBox="0 0 11 9"><rect x="0.5" y="0.5" width="10" height="8" fill="#f0f0f0" stroke="#7a7a7a"/><path d="M2.5,2.5 L8.5,2.5 L5.5,6Z" fill="#4a4a4a"/></svg></div>
<div class="abs" style="left:985px;top:386px;width:21px;height:15px;background:#e00038;border:1px solid #333"></div><div class="abs" style="left:1012px;top:388px;width:13px;height:13px"><svg width="13" height="13" viewBox="0 0 13 13" style="position:absolute;left:0;top:0"><rect x="0.5" y="0.5" width="12" height="12" fill="#fff" stroke="#333"/><path d="M2.3,6.3 L5,9 L10.6,3.4" fill="none" stroke="#333" stroke-width="1.3"/></svg></div><div class="t" style="left:1029px;top:388px;">PstI <b>(1/4)</b></div><div class="abs" style="left:1095px;top:390px"><svg width="11" height="9" viewBox="0 0 11 9"><rect x="0.5" y="0.5" width="10" height="8" fill="#f0f0f0" stroke="#7a7a7a"/><path d="M2.5,2.5 L8.5,2.5 L5.5,6Z" fill="#4a4a4a"/></svg></div>
<div class="abs" style="left:985px;top:409px;width:21px;height:15px;background:#e010e8;border:1px solid #333"></div><div class="abs" style="left:1012px;top:411px;width:13px;height:13px"><svg width="13" height="13" viewBox="0 0 13 13" style="position:absolute;left:0;top:0"><rect x="0.5" y="0.5" width="12" height="12" fill="#fff" stroke="#333"/><path d="M2.3,6.3 L5,9 L10.6,3.4" fill="none" stroke="#333" stroke-width="1.3"/></svg></div><div class="t" style="left:1029px;top:411px;">XbaI <b>(1/1)</b></div><div class="abs" style="left:1095px;top:413px"><svg width="11" height="9" viewBox="0 0 11 9"><rect x="0.5" y="0.5" width="10" height="8" fill="#f0f0f0" stroke="#7a7a7a"/><path d="M2.5,2.5 L8.5,2.5 L5.5,6Z" fill="#4a4a4a"/></svg></div>
<div class="abs" style="left:985px;top:432px;width:21px;height:15px;background:#10e0f0;border:1px solid #333"></div><div class="abs" style="left:1012px;top:434px;width:13px;height:13px"><svg width="13" height="13" viewBox="0 0 13 13" style="position:absolute;left:0;top:0"><rect x="0.5" y="0.5" width="12" height="12" fill="#fff" stroke="#333"/><path d="M2.3,6.3 L5,9 L10.6,3.4" fill="none" stroke="#333" stroke-width="1.3"/></svg></div><div class="t" style="left:1029px;top:434px;">XhoI <b>(1/2)</b></div><div class="abs" style="left:1095px;top:436px"><svg width="11" height="9" viewBox="0 0 11 9"><rect x="0.5" y="0.5" width="10" height="8" fill="#f0f0f0" stroke="#7a7a7a"/><path d="M2.5,2.5 L8.5,2.5 L5.5,6Z" fill="#4a4a4a"/></svg></div>
<div class="abs" style="left:977px;top:463px"><svg width="8" height="5" viewBox="0 0 8 5"><path d="M0,0 L8,0 L4,5Z" fill="#000"/></svg></div><div class="abs" style="left:997px;top:459px;width:13px;height:13px"><svg width="13" height="13" viewBox="0 0 13 13" style="position:absolute;left:0;top:0"><rect x="0.5" y="0.5" width="12" height="12" fill="#fff" stroke="#333"/><path d="M2.3,6.3 L5,9 L10.6,3.4" fill="none" stroke="#333" stroke-width="1.3"/></svg></div><div class="t" style="left:1014px;top:459px;">Double cutters</div>
<div class="abs" style="left:985px;top:482px;width:21px;height:15px;background:#404040;border:1px solid #333"></div><div class="abs" style="left:1012px;top:484px;width:13px;height:13px"><svg width="13" height="13" viewBox="0 0 13 13" style="position:absolute;left:0;top:0"><rect x="0.5" y="0.5" width="12" height="12" fill="#fff" stroke="#333"/><path d="M2.3,6.3 L5,9 L10.6,3.4" fill="none" stroke="#333" stroke-width="1.3"/></svg></div><div class="t" style="left:1029px;top:484px;">BglII <b>(2/3)</b></div><div class="abs" style="left:1085px;top:486px"><svg width="11" height="9" viewBox="0 0 11 9"><rect x="0.5" y="0.5" width="10" height="8" fill="#f0f0f0" stroke="#7a7a7a"/><path d="M2.5,2.5 L8.5,2.5 L5.5,6Z" fill="#4a4a4a"/></svg></div>
<div class="abs" style="left:985px;top:505px;width:21px;height:15px;background:#f89020;border:1px solid #333"></div><div class="abs" style="left:1012px;top:507px;width:13px;height:13px"><svg width="13" height="13" viewBox="0 0 13 13" style="position:absolute;left:0;top:0"><rect x="0.5" y="0.5" width="12" height="12" fill="#fff" stroke="#333"/><path d="M2.3,6.3 L5,9 L10.6,3.4" fill="none" stroke="#333" stroke-width="1.3"/></svg></div><div class="t" style="left:1029px;top:507px;">SmaI <b>(2/3)</b></div><div class="abs" style="left:1087px;top:509px"><svg width="11" height="9" viewBox="0 0 11 9"><rect x="0.5" y="0.5" width="10" height="8" fill="#f0f0f0" stroke="#7a7a7a"/><path d="M2.5,2.5 L8.5,2.5 L5.5,6Z" fill="#4a4a4a"/></svg></div>
<div class="abs" style="left:977px;top:536px"><svg width="8" height="5" viewBox="0 0 8 5"><path d="M0,0 L8,0 L4,5Z" fill="#000"/></svg></div><div class="abs" style="left:997px;top:532px;width:13px;height:13px"><svg width="13" height="13" viewBox="0 0 13 13" style="position:absolute;left:0;top:0"><rect x="0.5" y="0.5" width="12" height="12" fill="#fff" stroke="#333"/><path d="M2.3,6.3 L5,9 L10.6,3.4" fill="none" stroke="#333" stroke-width="1.3"/></svg></div><div class="t" style="left:1014px;top:532px;">Multiple cutters</div>
<div class="abs" style="left:985px;top:555px;width:21px;height:15px;background:#c0c0c0;border:1px solid #333"></div><div class="abs" style="left:1012px;top:557px;width:13px;height:13px"><svg width="13" height="13" viewBox="0 0 13 13" style="position:absolute;left:0;top:0"><rect x="0.5" y="0.5" width="12" height="12" fill="#fff" stroke="#333"/><path d="M2.3,6.3 L5,9 L10.6,3.4" fill="none" stroke="#333" stroke-width="1.3"/></svg></div><div class="t" style="left:1029px;top:557px;">SalI <b>(3/3)</b></div><div class="abs" style="left:1080px;top:559px"><svg width="11" height="9" viewBox="0 0 11 9"><rect x="0.5" y="0.5" width="10" height="8" fill="#f0f0f0" stroke="#7a7a7a"/><path d="M2.5,2.5 L8.5,2.5 L5.5,6Z" fill="#4a4a4a"/></svg></div>
<div class="abs btn" style="left:976px;top:576px;width:147px;height:19px">Select All</div>
<div class="abs btn" style="left:976px;top:599px;width:147px;height:19px">Deselect All</div>
<div class="abs btn" style="left:976px;top:622px;width:147px;height:19px">Manage Enzymes</div>
<div class="abs secbox" style="top:651px;height:18px"></div>
<div class="abs sechead" style="top:651px;height:18px"></div><div class="abs sectab" style="top:651px;height:18px;width:104px"></div><div class="t" style="left:904px;top:653px;">Motifs</div><div class="abs" style="left:1179px;top:655px"><svg width="12" height="11" viewBox="0 0 12 11"><path d="M0.5,0.5 L5.5,0.5 L6.3,1.5 L10.5,1.5 L10.5,9.5 L0.5,9.5 Z" fill="none" stroke="#808080"/></svg></div>
<div class="abs secbox" style="top:672px;height:18px"></div>
<div class="abs sechead" style="top:672px;height:18px"></div><div class="abs sectab" style="top:672px;height:18px;width:111px"></div><div class="t" style="left:904px;top:674px;">Residue coloring</div><div class="abs" style="left:1179px;top:676px"><svg width="12" height="11" viewBox="0 0 12 11"><path d="M0.5,0.5 L5.5,0.5 L6.3,1.5 L10.5,1.5 L10.5,9.5 L0.5,9.5 Z" fill="none" stroke="#808080"/></svg></div>
<div class="abs secbox" style="top:693px;height:18px"></div>
<div class="abs sechead" style="top:693px;height:18px"></div><div class="abs sectab" style="top:693px;height:18px;width:104px"></div><div class="t" style="left:904px;top:695px;">Nucleotide info</div><div class="abs" style="left:1179px;top:697px"><svg width="12" height="11" viewBox="0 0 12 11"><path d="M0.5,0.5 L5.5,0.5 L6.3,1.5 L10.5,1.5 L10.5,9.5 L0.5,9.5 Z" fill="none" stroke="#808080"/></svg></div>
<div class="abs secbox" style="top:714px;height:18px"></div>
<div class="abs sechead" style="top:714px;height:18px"></div><div class="abs sectab" style="top:714px;height:18px;width:104px"></div><div class="t" style="left:904px;top:716px;">Find</div><div class="abs" style="left:1179px;top:718px"><svg width="12" height="11" viewBox="0 0 12 11"><path d="M0.5,0.5 L5.5,0.5 L6.3,1.5 L10.5,1.5 L10.5,9.5 L0.5,9.5 Z" fill="none" stroke="#808080"/></svg></div>
<div class="abs secbox" style="top:735px;height:18px"></div>
<div class="abs sechead" style="top:735px;height:18px"></div><div class="abs sectab" style="top:735px;height:18px;width:104px"></div><div class="t" style="left:904px;top:737px;">Text format</div><div class="abs" style="left:1179px;top:739px"><svg width="12" height="11" viewBox="0 0 12 11"><path d="M0.5,0.5 L5.5,0.5 L6.3,1.5 L10.5,1.5 L10.5,9.5 L0.5,9.5 Z" fill="none" stroke="#808080"/></svg></div>
<div class="abs" style="left:1194px;top:22px;width:1px;height:867px;background:#fff"></div><div class="abs" style="left:1195px;top:22px;width:1px;height:867px;background:#a8a8a8"></div><div class="abs" style="left:894px;top:887px;width:300px;height:2px;background:#f0f0f0"></div>
</body></html>
